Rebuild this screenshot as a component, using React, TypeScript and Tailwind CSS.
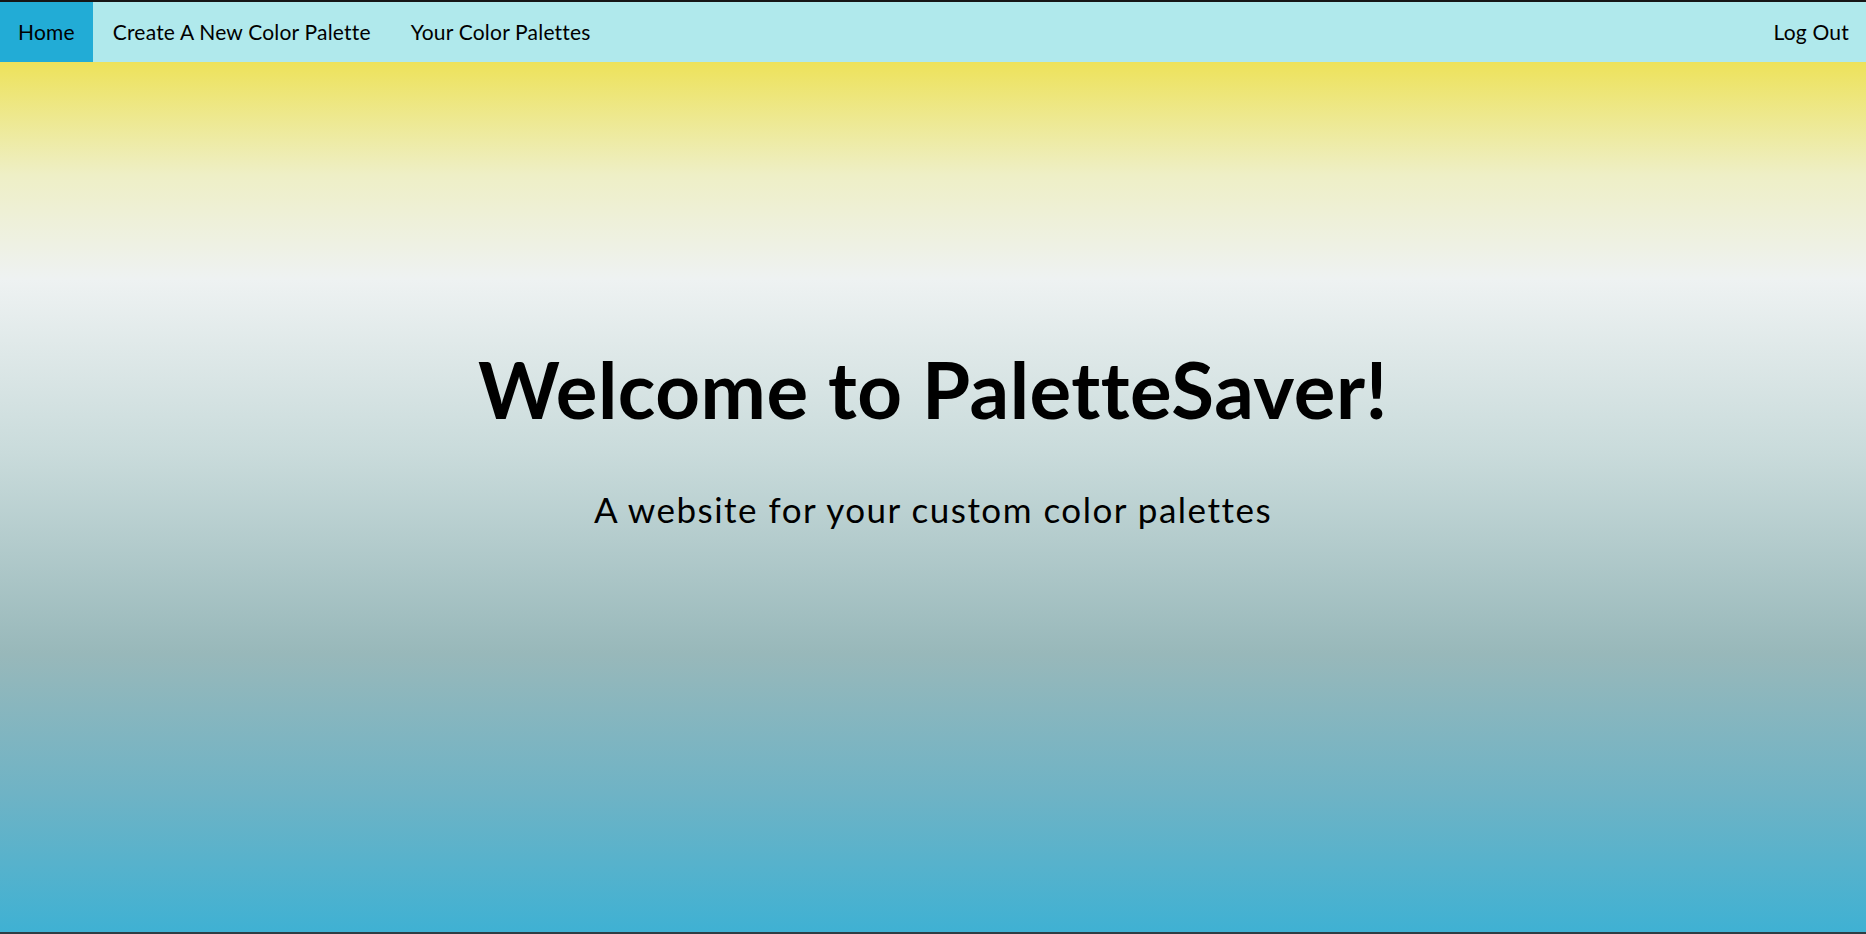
const links = ["Create A New Color Palette", "Your Color Palettes"];

export default function App() {
  return (
    <div
      className="flex h-[934px] w-full flex-col overflow-hidden border-t-2 border-b-2 border-t-[#161616] border-b-[#2e3e44] text-black"
      style={{ fontFamily: '"Trebuchet MS", Lato, "Open Sans", sans-serif' }}
    >
      <nav className="flex h-[60px] shrink-0 items-stretch bg-[#b0e9ec] text-[21px] tracking-[0.2px]">
        <a className="flex items-center bg-[#22acd6] px-[18px]" href="#">
          Home
        </a>
        {links.map((link) => (
          <a key={link} className="flex items-center px-5" href="#">
            {link}
          </a>
        ))}
        <a className="ml-auto flex items-center px-[17px]" href="#">
          Log Out
        </a>
      </nav>
      <main className="flex flex-1 flex-col items-center bg-[linear-gradient(180deg,#ede25a_0%,#eeefc6_13%,#eef2f2_25%,#c9dbdb_45%,#98b8ba_68%,#6fb3c5_84%,#3fb1d3_100%)]">
        <h1 className="mt-[288px] text-[78px] font-bold leading-none tracking-[0.5px]">
          Welcome to PaletteSaver!
        </h1>
        <p className="mt-[64px] text-[35px] leading-none tracking-[1.5px]">
          A website for your custom color palettes
        </p>
      </main>
    </div>
  );
}
